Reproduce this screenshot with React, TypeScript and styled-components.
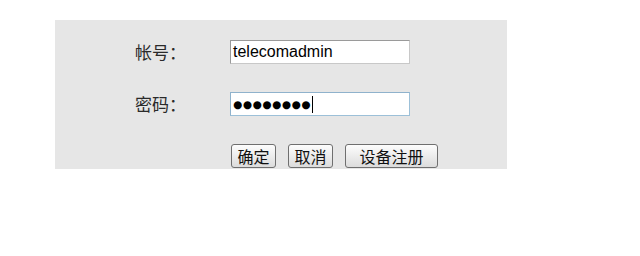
import React from "react";
import styled, { createGlobalStyle } from "styled-components";

const Global = createGlobalStyle`
  html, body { margin: 0; padding: 0; background: #ffffff; }
  body { font-family: "Noto Sans CJK SC", "Liberation Sans", sans-serif; }
`;

const Panel = styled.div`
  margin: 20px 0 0 55px;
  width: 452px;
  height: 149px;
  background: #e6e6e6;
  box-sizing: border-box;
  padding-top: 20px;
  display: grid;
  grid-template-columns: 175px 1fr;
  grid-auto-rows: 24px;
  row-gap: 28px;
`;

const Label = styled.div`
  padding-left: 80px;
  font-size: 17px;
  line-height: 24px;
  color: #2a2a2a;
`;

const Field = styled.div<{ $focused?: boolean }>`
  width: 180px;
  height: 24px;
  box-sizing: border-box;
  background: #ffffff;
  border: 1px solid ${(p) => (p.$focused ? "#9cc0d8" : "#c8c8c8")};
  border-top-color: ${(p) => (p.$focused ? "#8fb2cc" : "#9a9a9a")};
  border-left-color: ${(p) => (p.$focused ? "#8fb2cc" : "#9a9a9a")};
  display: flex;
  align-items: center;
  padding-left: 2px;
  font-family: "Liberation Sans", Arial, sans-serif;
  font-size: 16px;
  color: #000;
`;

const Dots = styled.span`
  font-family: "DejaVu Sans", sans-serif;
  font-size: 10.5px;
  letter-spacing: 0.6px;
  color: #000;
`;

const Caret = styled.span`
  display: inline-block;
  width: 1px;
  height: 17px;
  background: #000;
  margin-left: 1px;
`;

const Buttons = styled.div`
  display: flex;
  gap: 12px;
  padding-left: 1px;
`;

const Button = styled.button<{ $wide?: boolean }>`
  height: 24px;
  width: ${(p) => (p.$wide ? "93px" : "45px")};
  box-sizing: border-box;
  border: 1px solid #6f6f6f;
  border-radius: 3px;
  background: linear-gradient(#fdfdfd 0%, #ececec 50%, #dcdcdc 100%);
  font-family: "Noto Sans CJK SC", sans-serif;
  font-size: 16px;
  line-height: 20px;
  color: #111;
  padding: 0;
  margin: 0;
`;

export default function App() {
  return (
    <>
      <Global />
      <Panel>
        <Label>帐号：</Label>
        <Field>telecomadmin</Field>
        <Label>密码：</Label>
        <Field $focused>
          <Dots>●●●●●●●●</Dots>
          <Caret />
        </Field>
        <div />
        <Buttons>
          <Button>确定</Button>
          <Button>取消</Button>
          <Button $wide>设备注册</Button>
        </Buttons>
      </Panel>
    </>
  );
}
